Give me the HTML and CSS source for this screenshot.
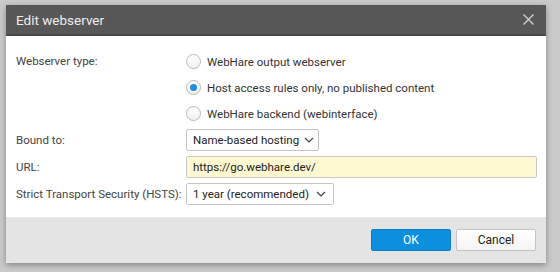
FILE: index.html
```html
<!DOCTYPE html>
<html lang="en">
<head>
	<meta charset="UTF-8">
	<title>Edit webserver</title>
	<link rel="stylesheet" href="styles.css">
</head>
<body>
	<div class="dialog">
		<div class="titlebar">
			<span class="title">Edit webserver</span>
			<svg class="close" width="11" height="11" viewBox="0 0 11 11">
				<path d="M0.5 0.5L10.5 10.5M10.5 0.5L0.5 10.5" stroke="#d0d0d0" stroke-width="1.4" fill="none"/>
			</svg>
		</div>
		<div class="form">
			<div class="label top">Webserver type:</div>
			<div class="radios">
				<label class="radio"><span class="dot"></span>WebHare output webserver</label>
				<label class="radio"><span class="dot checked"></span>Host access rules only, no published content</label>
				<label class="radio"><span class="dot"></span>WebHare backend (webinterface)</label>
			</div>
			<div class="label">Bound to:</div>
			<div class="field">
				<div class="select sel-bound"><span>Name-based hosting</span>
					<svg class="chev" width="10" height="6" viewBox="0 0 10 6"><path d="M1 1L5 5L9 1" stroke="#444" stroke-width="1.2" fill="none"/></svg>
				</div>
			</div>
			<div class="label">URL:</div>
			<div class="field">
				<div class="input">https://go.webhare.dev/</div>
			</div>
			<div class="label">Strict Transport Security (HSTS):</div>
			<div class="field">
				<div class="select sel-hsts"><span>1 year (recommended)</span>
					<svg class="chev" width="10" height="6" viewBox="0 0 10 6"><path d="M1 1L5 5L9 1" stroke="#444" stroke-width="1.2" fill="none"/></svg>
				</div>
			</div>
		</div>
		<div class="footer">
			<div class="btn ok">OK</div>
			<div class="btn cancel">Cancel</div>
		</div>
	</div>
</body>
</html>
```

FILE: styles.css
```css
html, body {
	margin: 0;
	padding: 0;
}
body {
	background: #cacaca;
	font-family: Roboto, "Liberation Sans", sans-serif;
	font-size: 11.5px;
	color: #333;
	padding: 5px 0 0 6px;
	height: 272px;
	box-sizing: border-box;
	white-space: nowrap;
}
.dialog {
	width: 540px;
	background: #fff;
	box-shadow: 0 2px 6px rgba(0, 0, 0, 0.35);
}
.titlebar {
	height: 29px;
	background: #575757;
	border-bottom: 2px solid #474747;
	display: flex;
	align-items: center;
	justify-content: space-between;
	padding: 0 12px 0 10px;
}
.title {
	color: #eee;
	font-size: 13.5px;
}
.close {
	display: block;
}
.form {
	display: grid;
	grid-template-columns: 170px 1fr;
	row-gap: 5px;
	padding: 15px 9px 12px 10px;
}
.label {
	height: 22px;
	line-height: 22px;
	color: #444;
}
.label.top {
	height: 21px;
	line-height: 21px;
}
.radios {
	display: flex;
	flex-direction: column;
	gap: 5px;
}
.radio {
	height: 21px;
	display: flex;
	align-items: center;
	color: #333;
}
.dot {
	width: 13px;
	height: 13px;
	border: 1px solid #b8b8b8;
	border-radius: 50%;
	background: linear-gradient(#fff, #f0f0f0);
	margin-right: 6px;
	position: relative;
	flex-shrink: 0;
}
.dot.checked::after {
	content: "";
	position: absolute;
	left: 3px;
	top: 3px;
	width: 7px;
	height: 7px;
	border-radius: 50%;
	background: #1b8ee8;
}
.field {
	display: flex;
}
.select {
	height: 22px;
	border: 1px solid #c4c4c4;
	border-radius: 2px;
	background: #fff;
	display: flex;
	align-items: center;
	gap: 5px;
	padding: 0 7px 0 6px;
	color: #222;
	box-sizing: border-box;
}
.chev {
	margin-left: auto;
	flex-shrink: 0;
}
.sel-bound {
	width: 133px;
}
.sel-hsts {
	width: 148px;
}
.input {
	flex: 1;
	height: 20px;
	line-height: 20px;
	border: 1px solid #c8c8c8;
	border-radius: 2px;
	background: #fdf8cf;
	padding: 0 6px;
	color: #222;
}
.footer {
	background: #e4e4e4;
	height: 46px;
	display: flex;
	justify-content: flex-end;
	align-items: flex-start;
	gap: 5px;
	padding: 12px 10px 0 0;
	box-sizing: border-box;
}
.btn {
	width: 80px;
	height: 22px;
	line-height: 20px;
	text-align: center;
	border-radius: 2px;
	box-sizing: border-box;
	font-size: 12px;
}
.ok {
	background: #0d8fe0;
	color: #fff;
	border: 1px solid #0a7fc8;
}
.cancel {
	background: linear-gradient(#fff, #f4f4f4);
	border: 1px solid #c4c4c4;
	color: #222;
}
```
